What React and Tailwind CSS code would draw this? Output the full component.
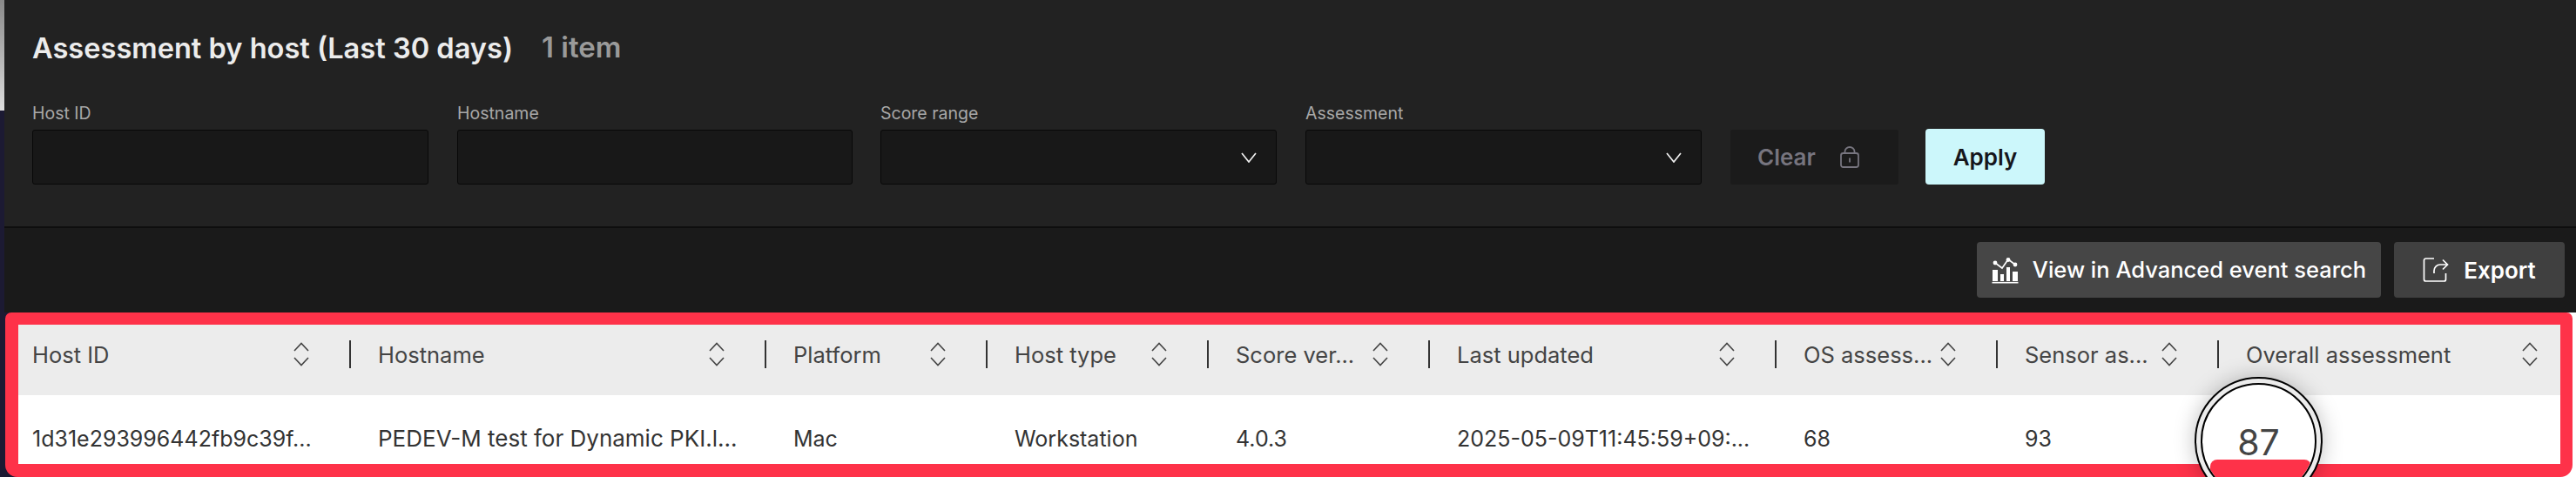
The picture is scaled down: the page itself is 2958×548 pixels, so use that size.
import React from "react";

const columns = [
  { name: "Host ID", value: "1d31e293996442fb9c39f...", width: "w-[380px]", head: "pl-[16px] pr-[45px]", cell: "pl-[16px] text-[25px]" },
  { name: "Hostname", value: "PEDEV-M test for Dynamic PKI.l...", width: "w-[477px]", head: "pl-[33px] pr-[45px]", cell: "pl-[33px] text-[26px]" },
  { name: "Platform", value: "Mac", width: "w-[254px]", head: "pl-[33px] pr-[45px]", cell: "pl-[33px] text-[25px]" },
  { name: "Host type", value: "Workstation", width: "w-[254px]", head: "pl-[33px] pr-[45px]", cell: "pl-[33px] text-[25px]" },
  { name: "Score ver...", value: "4.0.3", width: "w-[254px]", head: "pl-[33px] pr-[45px]", cell: "pl-[33px] text-[25px]" },
  { name: "Last updated", value: "2025-05-09T11:45:59+09:...", width: "w-[398px]", head: "pl-[33px] pr-[45px]", cell: "pl-[33px] text-[25px]" },
  { name: "OS assess...", value: "68", width: "w-[254px]", head: "pl-[33px] pr-[45px]", cell: "pl-[33px] text-[25px]" },
  { name: "Sensor as...", value: "93", width: "w-[254px]", head: "pl-[33px] pr-[45px]", cell: "pl-[33px] text-[25px]" },
  { name: "Overall assessment", value: "", width: "flex-1", head: "pl-[33px] pr-[25px]", cell: "pl-[33px] text-[25px]" },
];

const SortIcon = () => (
  <svg width="20" height="28" viewBox="0 0 20 28" fill="none" stroke="#444" strokeWidth="1.6" className="shrink-0">
    <path d="M2 10 L10 1.5 L18 10" />
    <path d="M2 18 L10 26.5 L18 18" />
  </svg>
);

const SelectArrow = () => (
  <svg width="18" height="12" viewBox="0 0 18 12" fill="none" stroke="#eeeeee" strokeWidth="1.7">
    <path d="M1 1 L9 11 L17 1" />
  </svg>
);

const LockIcon = () => (
  <svg width="22" height="25" viewBox="0 0 22 25" fill="none" stroke="#77757f" strokeWidth="1.8" className="ml-[28px] shrink-0">
    <rect x="1" y="8" width="20" height="16" rx="2.5" />
    <path d="M5.5 8V6a5.5 5 0 0 1 11 0v2" />
    <path d="M11 13.5v5" />
  </svg>
);

const ChartIcon = () => (
  <svg width="31" height="31" viewBox="0 0 31 31" fill="none" className="shrink-0">
    <path d="M4 7 L12 13 L19 3 L27 9" stroke="#fff" strokeWidth="1.6" />
    <circle cx="4" cy="7" r="2.4" fill="#fff" />
    <circle cx="19" cy="3.5" r="2.4" fill="#fff" />
    <circle cx="27" cy="9" r="2.4" fill="#fff" />
    <path d="M1 15h6v13H1zM10 20h4v8h-4zM17 12h4v16h-4zM24 17h6v11h-6z" fill="#fff" />
    <path d="M0.5 29.7h30" stroke="#fff" strokeWidth="1.6" />
  </svg>
);

const ExportIcon = () => (
  <svg width="30" height="30" viewBox="0 0 30 30" fill="none" stroke="#fff" strokeWidth="1.7" className="shrink-0">
    <path d="M13 2H3.5A2 2 0 0 0 1.5 4v22a2 2 0 0 0 2 2h21a2 2 0 0 0 2-2v-7" />
    <path d="M13 19v-3a7 7 0 0 1 7-7h8" />
    <path d="M23 3.5 L28.5 9 L23 14.5" />
  </svg>
);

const Field = ({ label, select, className }) => (
  <div className={`flex flex-col ${className}`}>
    <label className="text-[19.5px] leading-[24px] text-[#a8a8a8] mb-[7px]">{label}</label>
    <div className="h-[63px] bg-[#181818] border border-[#080808] rounded-[3px] flex items-center justify-end pr-[22px]">
      {select && <SelectArrow />}
    </div>
  </div>
);

export default function App() {
  return (
    <div className="flex w-[2958px] h-[548px] overflow-hidden bg-white font-['Inter',sans-serif]">
      <div className="w-[5px] shrink-0 flex flex-col">
        <div className="h-[127px] bg-linear-to-b from-[#8a8a8a] to-[#dedede]" />
        <div className="flex-1 bg-[#1c1a33]" />
      </div>

      <div className="flex-1 flex flex-col relative">
        <section className="h-[262px] shrink-0 bg-[#222222] border-b-2 border-[#0e0e0e] pl-[32px] pt-[33px]">
          <div className="flex items-center h-[44px]">
            <h1 className="text-[32.6px] font-semibold text-[#ececec]">Assessment by host (Last 30 days)</h1>
            <span className="ml-[33px] text-[33px] font-semibold text-[#9a9a9a]">1 item</span>
          </div>
          <div className="flex items-end mt-[41px]">
            <Field label="Host ID" className="w-[455px] mr-[33px]" />
            <Field label="Hostname" className="w-[454px] mr-[32px]" />
            <Field label="Score range" select className="w-[455px] mr-[33px]" />
            <Field label="Assessment" select className="w-[455px] mr-[33px]" />
            <button className="w-[193px] h-[63px] bg-[#1b1b1b] rounded-[3px] flex items-center pl-[31px] text-[26px] font-semibold text-[#77757f]">
              Clear
              <LockIcon />
            </button>
            <button className="w-[137px] h-[64px] ml-[31px] bg-[#ccf7fb] rounded-[4px] text-[26px] font-semibold text-[#16161c]">
              Apply
            </button>
          </div>
        </section>

        <div className="h-[97px] shrink-0 bg-[#1a1a1a] flex justify-end items-start pt-[16px] pr-[13px] gap-[15px]">
          <button className="w-[464px] h-[64px] bg-[#464646] rounded-[4px] flex items-center justify-center gap-[16px] text-[25.5px] font-medium text-white">
            <ChartIcon />
            View in Advanced event search
          </button>
          <button className="w-[196px] h-[64px] bg-[#404040] rounded-[4px] flex items-center justify-center gap-[17px] text-[26px] font-semibold text-white">
            <ExportIcon />
            Export
          </button>
        </div>

        <div className="flex-1 pl-px pr-[4px] bg-[linear-gradient(to_right,#1c1a33_50%,#ffffff_50%)]">
          <div className="h-full bg-[#fe3249] rounded-t-[7px] rounded-b-[14px] pt-[14px] pl-[15px] pr-[14px]">
            <div className="h-[81px] bg-[#ececec] flex">
              {columns.map((col, i) => (
                <div key={col.name} className={`${col.width} ${col.head} relative h-full flex items-start pt-[20px]`}>
                  {i > 0 && <span className="absolute left-0 top-[18px] h-[32px] w-[1.5px] bg-[#333]" />}
                  <span className="flex-1 text-[25.5px] leading-[28px] pt-px text-[#444] whitespace-nowrap">{col.name}</span>
                  <SortIcon />
                </div>
              ))}
            </div>
            <div className="h-[79px] bg-white flex">
              {columns.map((col) => (
                <div key={col.name} className={`${col.width} ${col.cell} h-full pt-[36px] leading-[28px] text-[#333] whitespace-nowrap`}>
                  {col.value}
                </div>
              ))}
            </div>
          </div>
        </div>

        {/* magnifier over the score cell */}
        <div className="absolute left-[2515px] top-[433px] w-[147px] h-[147px] rounded-full bg-[#ececec] border-2 border-black p-[5px] shadow-[0_0_24px_rgba(0,0,0,0.25)]">
          <div className="relative w-full h-full rounded-full bg-white border-2 border-black overflow-hidden flex justify-center">
            <span className="mt-[44px] text-[41px] leading-[44px] text-[#444]">87</span>
            <div className="absolute left-[9px] right-[4px] top-[86px] h-[60px] bg-[#fe3249] rounded-t-[8px]" />
          </div>
        </div>
      </div>
    </div>
  );
}
